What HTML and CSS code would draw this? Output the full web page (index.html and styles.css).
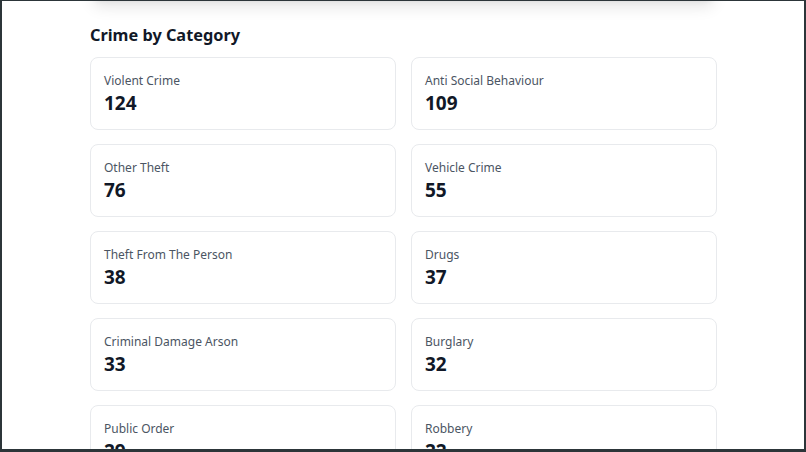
FILE: index.html
```html
<!DOCTYPE html>
<html>
<head>
<meta charset="utf-8">
<link rel="stylesheet" href="styles.css">
</head>
<body>
<div class="frame">
  <div class="page">
    <div class="top-card"></div>
    <h2 class="section-title">Crime by Category</h2>
    <div class="grid">
      <div class="card"><div class="label">Violent Crime</div><div class="value">124</div></div>
      <div class="card"><div class="label">Anti Social Behaviour</div><div class="value">109</div></div>
      <div class="card"><div class="label">Other Theft</div><div class="value">76</div></div>
      <div class="card"><div class="label">Vehicle Crime</div><div class="value">55</div></div>
      <div class="card"><div class="label">Theft From The Person</div><div class="value">38</div></div>
      <div class="card"><div class="label">Drugs</div><div class="value">37</div></div>
      <div class="card"><div class="label">Criminal Damage Arson</div><div class="value">33</div></div>
      <div class="card"><div class="label">Burglary</div><div class="value">32</div></div>
      <div class="card"><div class="label">Public Order</div><div class="value">29</div></div>
      <div class="card"><div class="label">Robbery</div><div class="value">22</div></div>
    </div>
  </div>
</div>
</body>
</html>
```
FILE: styles.css
```css
html, body {
  margin: 0;
  padding: 0;
  background: #ffffff;
}
.frame {
  box-sizing: border-box;
  width: 806px;
  height: 452px;
  border-style: solid;
  border-color: #2c3539;
  border-width: 1px 2px 3px 2px;
  overflow: hidden;
  background: #ffffff;
  font-family: "Noto Sans", "Open Sans", sans-serif;
}
.page {
  width: 627px;
  margin: 0 0 0 88px;
}
.top-card {
  height: 40px;
  margin-top: -41px;
  border-radius: 10px;
  background: #ffffff;
  box-shadow: 0 10px 15px -3px rgba(0,0,0,0.1), 0 4px 6px -4px rgba(0,0,0,0.1);
}
.section-title {
  margin: 24px 0 0 0;
  font-size: 16.3px;
  line-height: 22px;
  font-weight: 700;
  color: #111827;
}
.grid {
  margin-top: 11px;
  display: grid;
  grid-template-columns: 1fr 1fr;
  column-gap: 15px;
  row-gap: 14px;
}
.card {
  border: 1px solid #e8eaed;
  border-radius: 8px;
  padding: 14px 13px 13px 13px;
}
.label {
  font-size: 12px;
  line-height: 18px;
  color: #4b5563;
}
.value {
  font-size: 19px;
  line-height: 26px;
  font-weight: 700;
  color: #111827;
}
```
